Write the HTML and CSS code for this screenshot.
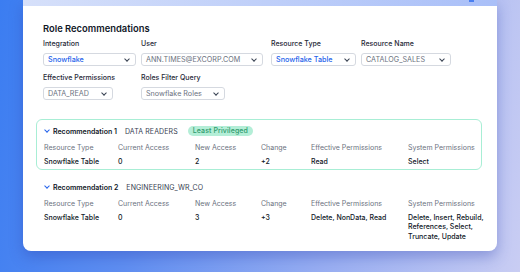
FILE: index.html
```html
<!DOCTYPE html>
<html lang="en">
<head>
    <meta charset="UTF-8">
    <meta name="viewport" content="width=device-width, initial-scale=1.0">
    <title>Role Recommendations</title>
    <link rel="stylesheet" href="styles.css">
</head>
<body>
    <div class="card">
        <div class="card-top"><span class="top-icon"></span></div>
        <div class="card-body">
            <div class="title">Role Recommendations</div>

            <div class="filters">
                <div class="field">
                    <div class="label">Integration</div>
                    <div class="select w-int active">Snowflake<span class="caret"></span></div>
                </div>
                <div class="field">
                    <div class="label">User</div>
                    <div class="select w-user">ANN.TIMES@EXCORP.COM<span class="caret"></span></div>
                </div>
                <div class="field">
                    <div class="label">Resource Type</div>
                    <div class="select w-type active">Snowflake Table<span class="caret"></span></div>
                </div>
                <div class="field">
                    <div class="label">Resource Name</div>
                    <div class="select w-name">CATALOG_SALES<span class="caret"></span></div>
                </div>
                <div class="field">
                    <div class="label">Effective Permissions</div>
                    <div class="select w-perm">DATA_READ<span class="caret"></span></div>
                </div>
                <div class="field">
                    <div class="label">Roles Filter Query</div>
                    <div class="select w-query">Snowflake Roles<span class="caret"></span></div>
                </div>
            </div>

            <div class="rec selected">
                <div class="rec-head">
                    <span class="chev"></span>
                    <span class="rec-name">Recommendation 1</span>
                    <span class="rec-role">DATA READERS</span>
                    <span class="badge">Least Privileged</span>
                </div>
                <div class="rec-table">
                    <div class="th">Resource Type</div>
                    <div class="th">Current Access</div>
                    <div class="th">New Access</div>
                    <div class="th">Change</div>
                    <div class="th">Effective Permissions</div>
                    <div class="th">System Permissions</div>
                    <div class="td">Snowflake Table</div>
                    <div class="td">0</div>
                    <div class="td">2</div>
                    <div class="td">+2</div>
                    <div class="td">Read</div>
                    <div class="td">Select</div>
                </div>
            </div>

            <div class="rec">
                <div class="rec-head">
                    <span class="chev"></span>
                    <span class="rec-name">Recommendation 2</span>
                    <span class="rec-role">ENGINEERING_WR_CO</span>
                </div>
                <div class="rec-table">
                    <div class="th">Resource Type</div>
                    <div class="th">Current Access</div>
                    <div class="th">New Access</div>
                    <div class="th">Change</div>
                    <div class="th">Effective Permissions</div>
                    <div class="th">System Permissions</div>
                    <div class="td">Snowflake Table</div>
                    <div class="td">0</div>
                    <div class="td">3</div>
                    <div class="td">+3</div>
                    <div class="td">Delete, NonData, Read</div>
                    <div class="td">Delete, Insert, Rebuild,<br>References, Select,<br>Truncate, Update</div>
                </div>
            </div>
        </div>
    </div>
</body>
</html>
```

FILE: styles.css
```css
html, body {
    height: 100%;
}
body {
    margin: 0;
    font-family: Inter, "Noto Sans", sans-serif;
    color: #111827;
    background: linear-gradient(100deg, #3b7df1 0%, #5f8ef1 30%, #98aef2 65%, #c9cdf3 100%);
    overflow: hidden;
}
.card {
    margin-left: 23px;
    width: 474px;
    background-color: #fff;
    border-radius: 0 0 8px 8px;
    box-shadow: 0 6px 14px rgba(40, 60, 170, 0.35);
}
.card-top {
    height: 6px;
    background: linear-gradient(90deg, #d6e0fa, #a9bff8);
    position: relative;
}
.top-icon {
    position: absolute;
    right: 23px;
    top: 0;
    width: 5px;
    height: 2px;
    background-color: #4a7ff0;
}
.card-body {
    padding: 17px 8px 6px 20px;
}
.title {
    font-size: 9.4px;
    font-weight: 600;
    line-height: 11px;
    margin-bottom: 5px;
}
.filters {
    display: grid;
    grid-template-columns: 93px 125px 85px 90px;
    column-gap: 5px;
    row-gap: 7px;
}
.label {
    font-size: 7px;
    font-weight: 500;
    color: #1f2937;
    height: 10px;
    line-height: 10px;
    margin-bottom: 4px;
}
.select {
    position: relative;
    height: 13px;
    line-height: 11px;
    box-sizing: border-box;
    border: 1px solid #d5d9e0;
    border-radius: 3px;
    padding-left: 4px;
    font-size: 7.2px;
    color: #6b7280;
}
.select.active {
    color: #2563eb;
    font-weight: 500;
}
.caret {
    position: absolute;
    right: 6px;
    top: 2.5px;
    width: 3px;
    height: 3px;
    border-right: 1px solid #374151;
    border-bottom: 1px solid #374151;
    transform: rotate(45deg);
}
.w-int { width: 93px; }
.w-user { width: 122px; }
.w-type { width: 85px; }
.w-name { width: 90px; }
.w-perm { width: 70px; }
.w-query { width: 84px; }

.rec {
    margin: 0 7px 0 -7px;
    padding: 5px 1px 3px 7px;
    border: 1px solid transparent;
    border-radius: 6px;
}
.rec.selected {
    margin-top: 19px;
    margin-bottom: 5px;
    border-color: #a8eed5;
}
.rec-head {
    display: flex;
    align-items: center;
    height: 12px;
    font-size: 7px;
}
.chev {
    width: 3px;
    height: 3px;
    border-right: 1.2px solid #2563eb;
    border-bottom: 1.2px solid #2563eb;
    transform: rotate(45deg);
    margin: 0 4px -1px 1px;
    position: relative;
    top: -2px;
}
.rec-name {
    font-weight: 600;
    margin-right: 8px;
}
.rec-role {
    color: #374151;
    margin-right: 10px;
    letter-spacing: 0.1px;
}
.badge {
    background-color: #b4eed7;
    color: #2f9a6c;
    font-weight: 500;
    border-radius: 5px;
    padding: 0 5px;
    line-height: 10px;
    letter-spacing: 0.1px;
}
.rec-table {
    display: grid;
    grid-template-columns: 74px 77px 66px 50px 97px 1fr;
    margin-top: 6px;
    font-size: 7px;
    line-height: 9.5px;
    white-space: nowrap;
}
.th {
    color: #6b7280;
    padding-bottom: 4px;
}
.td {
    font-weight: 500;
    color: #111827;
}
```
